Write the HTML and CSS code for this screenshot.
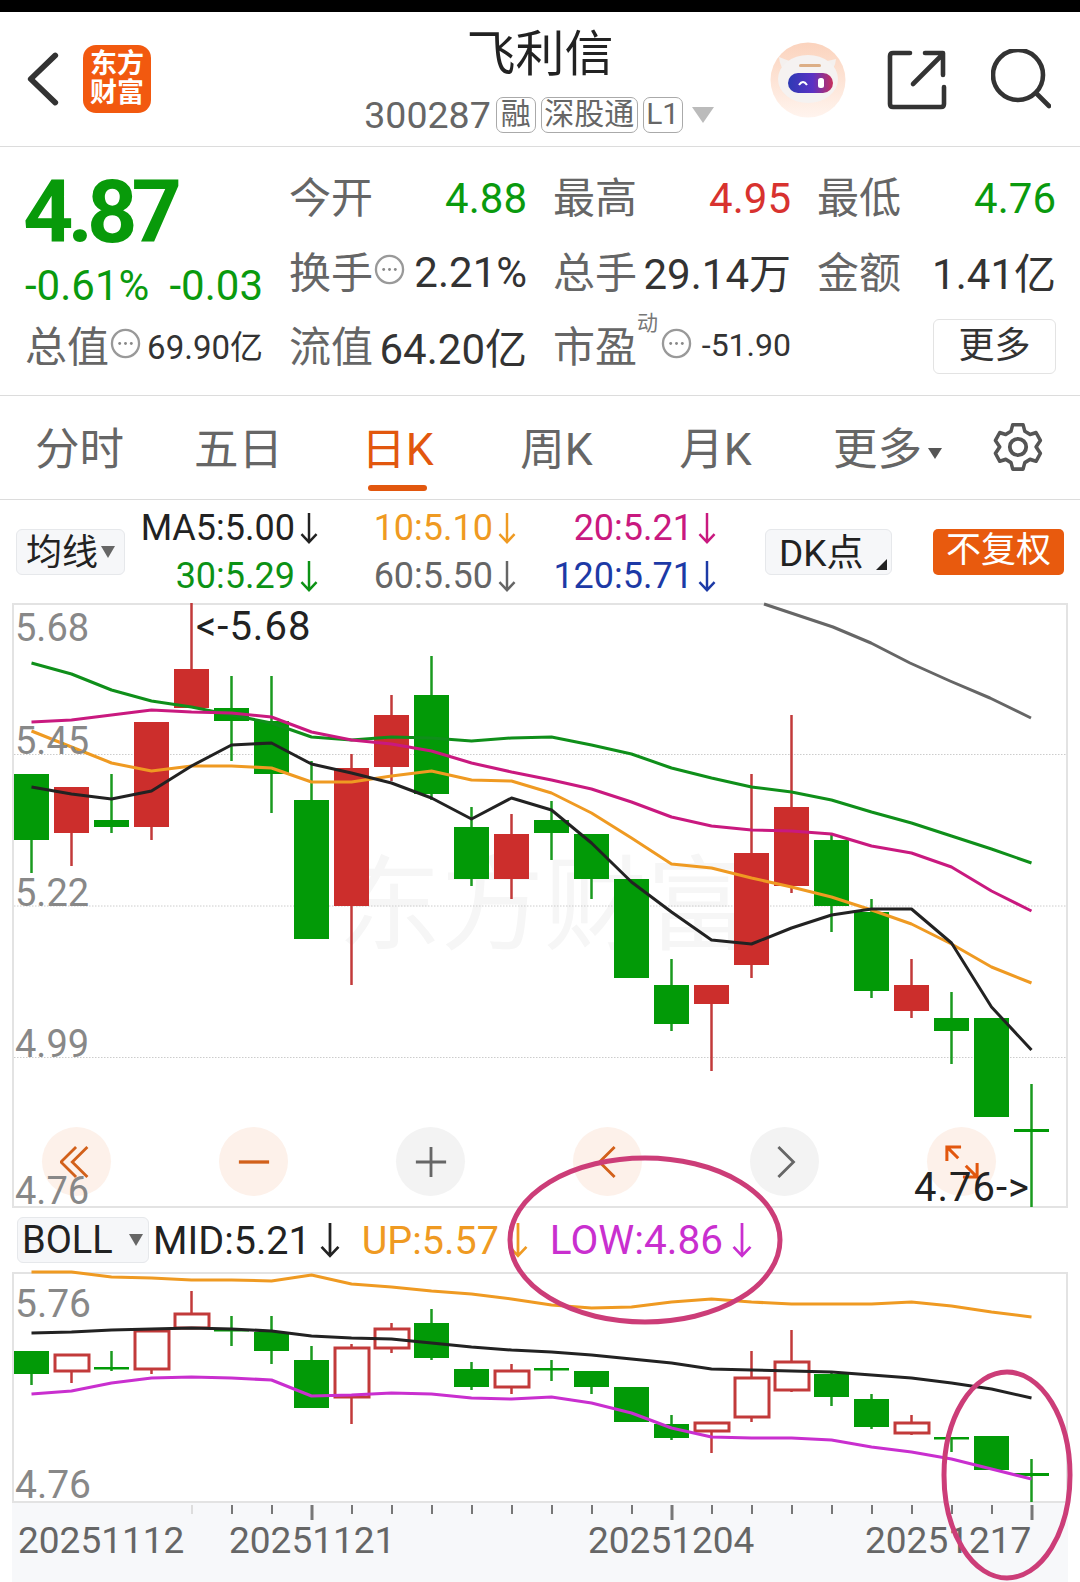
FILE: index.html
```html
<!DOCTYPE html>
<html lang="zh">
<head>
  <meta charset="UTF-8">
  <meta name="viewport" content="width=device-width, initial-scale=1.0">
  <title>飞利信 300287</title>
  <link rel="stylesheet" href="styles.css">
</head>
<body>

  <!-- shared icons -->
  <svg class="defs" width="0" height="0">
    <symbol id="down" viewBox="0 0 20 36">
      <path d="M10 2V33M2 24.5L10 33L18 24.5" fill="none" stroke="currentColor" stroke-width="2.6"/>
    </symbol>
    <symbol id="dots" viewBox="0 0 32 32">
      <circle cx="16" cy="16" r="14" fill="none" stroke="#999" stroke-width="2.4"/>
      <circle cx="10" cy="16" r="1.5" fill="#888"/>
      <circle cx="16" cy="16" r="1.5" fill="#888"/>
      <circle cx="22" cy="16" r="1.5" fill="#888"/>
    </symbol>
  </svg>

  <div class="status-bar"></div>

  <header class="top-bar">
    <div class="top-left">
      <svg class="back" viewBox="0 0 36 56"><path d="M31 3L5 28L31 53" fill="none" stroke="#333" stroke-width="6" stroke-linecap="round" stroke-linejoin="round"/></svg>
      <div class="logo">东方<br>财富</div>
    </div>
    <div class="title-box">
      <div class="name">飞利信</div>
      <div class="code-row">
        <span class="code">300287</span>
        <span class="tag tag-rong">融</span>
        <span class="tag">深股通</span>
        <span class="tag">L1</span>
        <span class="tag-arrow"></span>
      </div>
    </div>
    <div class="top-right">
      <svg class="bot" viewBox="0 0 76 76">
        <defs>
          <linearGradient id="peach" x1="0" x2="0" y1="0" y2="1">
            <stop offset="0" stop-color="#fbd3bd"/>
            <stop offset="1" stop-color="#fff4ee"/>
          </linearGradient>
          <linearGradient id="visor" x1="0" x2="1" y1="0" y2="0">
            <stop offset="0" stop-color="#2d3ab4"/>
            <stop offset="0.55" stop-color="#5a32c4"/>
            <stop offset="1" stop-color="#c72f5c"/>
          </linearGradient>
        </defs>
        <circle cx="38" cy="38" r="37.5" fill="url(#peach)"/>
        <path d="M9 15Q10 27 17 30L22 20ZM66 17Q65 28 58 30L53 20Z" fill="#f4f0ee"/>
        <ellipse cx="38" cy="37" rx="30" ry="24" fill="#f5f2f1"/>
        <rect x="29" y="22" width="22" height="3" rx="1.5" fill="#dcae86"/>
        <rect x="18" y="31" width="45" height="20" rx="10" fill="url(#visor)"/>
        <path d="M29 43Q33 37 37 43" fill="none" stroke="#fff" stroke-width="2"/>
        <rect x="48" y="36" width="6" height="10" rx="2.5" fill="#fff"/>
      </svg>
      <svg class="share" viewBox="0 0 60 60"><path d="M23 3H6Q3 3 3 6V54Q3 57 6 57H54Q57 57 57 54V37M26 34L55 5M38 3H56V25" fill="none" stroke="#333" stroke-width="4.6" stroke-linecap="round" stroke-linejoin="round"/></svg>
      <svg class="search" viewBox="0 0 60 60"><circle cx="27" cy="26" r="25" fill="none" stroke="#333" stroke-width="4.6"/><path d="M45 44L58 57" fill="none" stroke="#333" stroke-width="4.6" stroke-linecap="round"/></svg>
    </div>
  </header>

  <section class="quote">
    <div class="q-price">4.87</div>
    <div class="q-cell"><span class="lb">今开</span><span class="val green">4.88</span></div>
    <div class="q-cell"><span class="lb">最高</span><span class="val red">4.95</span></div>
    <div class="q-cell"><span class="lb">最低</span><span class="val green">4.76</span></div>

    <div class="q-change green"><span>-0.61%</span><span>-0.03</span></div>
    <div class="q-cell"><span class="lb">换手<svg class="dots"><use href="#dots"/></svg></span><span class="val">2.21%</span></div>
    <div class="q-cell"><span class="lb">总手</span><span>29.14万</span></div>
    <div class="q-cell"><span class="lb">金额</span><span>1.41亿</span></div>

    <div class="q-cell"><span class="lb">总值<svg class="dots"><use href="#dots"/></svg></span><span class="small">69.90亿</span></div>
    <div class="q-cell"><span class="lb">流值</span><span>64.20亿</span></div>
    <div class="q-cell"><span class="lb">市盈<sup class="dong">动</sup><svg class="dots"><use href="#dots"/></svg></span><span class="smaller">-51.90</span></div>
    <div class="q-more"><button class="more-btn">更多</button></div>
  </section>

  <nav class="tabs">
    <div class="tab">分时</div>
    <div class="tab">五日</div>
    <div class="tab active">日K</div>
    <div class="tab">周K</div>
    <div class="tab">月K</div>
    <div class="tab tab-more">更多<span class="tab-arrow"></span></div>
    <svg class="gear" viewBox="0 0 52 54">
      <path d="M20 3H32L34 10L40 13.500L47 11.500L52 20L47 27L52 34L47 42.500L40 40.500L34 44L32 51H20L18 44L12 40.500L5 42.500L0 34L5 27L0 20L5 11.500L12 13.500L18 10Z" transform="translate(2.500 1) scale(.9 .96)" fill="none" stroke="#555" stroke-width="4" stroke-linejoin="round"/>
      <circle cx="26" cy="27" r="8.500" fill="none" stroke="#555" stroke-width="4"/>
    </svg>
  </nav>

  <div class="ma-bar">
    <div class="select select-ma">均线<span class="sel-arrow"></span></div>
    <div class="ma-grid">
      <span class="c-black">MA5:5.00<svg class="arr"><use href="#down"/></svg></span>
      <span class="c-orange">10:5.10<svg class="arr"><use href="#down"/></svg></span>
      <span class="c-pink">20:5.21<svg class="arr"><use href="#down"/></svg></span>
      <span class="c-green">30:5.29<svg class="arr"><use href="#down"/></svg></span>
      <span class="c-grey">60:5.50<svg class="arr"><use href="#down"/></svg></span>
      <span class="c-blue">120:5.71<svg class="arr"><use href="#down"/></svg></span>
    </div>
    <div class="select select-dk">DK点<span class="corner"></span></div>
    <div class="fq-btn">不复权</div>
  </div>

  <div class="chart chart-main">
    <svg id="mainChart" class="plot" viewBox="14 605 1052 601"></svg>
    <div class="watermark">东方财富</div>
    <div class="chart-tools">
      <div class="tool warm"><svg viewBox="0 0 36 36"><path d="M17 2L1 18L17 34M29 2L13 18L29 34" fill="none" stroke="#d2601a" stroke-width="3"/></svg></div>
      <div class="tool warm"><svg viewBox="0 0 36 36"><path d="M2 18H34" fill="none" stroke="#d2601a" stroke-width="3.500"/></svg></div>
      <div class="tool cold"><svg viewBox="0 0 36 36"><path d="M2 18H34M18 2V34" fill="none" stroke="#666" stroke-width="3"/></svg></div>
      <div class="tool warm"><svg viewBox="0 0 36 36"><path d="M25 2L9 18L25 34" fill="none" stroke="#d2601a" stroke-width="3"/></svg></div>
      <div class="tool cold"><svg viewBox="0 0 36 36"><path d="M11 2L27 18L11 34" fill="none" stroke="#666" stroke-width="3"/></svg></div>
      <div class="tool warm"><svg viewBox="0 0 36 36"><path d="M2 17V2H17M2 2L14 14M34 19V34H19M34 34L22 22" fill="none" stroke="#e2570e" stroke-width="3.200"/></svg></div>
    </div>
    <svg class="plot-labels" viewBox="14 605 1052 601">
      <text class="axis" x="15" y="641">5.68</text>
      <text class="axis" x="15" y="754">5.45</text>
      <text class="axis" x="15" y="906">5.22</text>
      <text class="axis" x="15" y="1057">4.99</text>
      <text class="axis" x="15" y="1204">4.76</text>
      <text class="mark" x="196" y="640">&lt;-5.68</text>
      <text class="mark" x="914" y="1201">4.76-&gt;</text>
    </svg>
  </div>

  <div class="boll-bar">
    <div class="select select-boll">BOLL<span class="sel-arrow"></span></div>
    <span class="boll-item c-black">MID:5.21<svg class="arr arr-lg"><use href="#down"/></svg></span>
    <span class="boll-item c-orange">UP:5.57<svg class="arr arr-lg"><use href="#down"/></svg></span>
    <span class="boll-item c-violet">LOW:4.86<svg class="arr arr-lg"><use href="#down"/></svg></span>
  </div>

  <div class="chart chart-sub">
    <svg id="subChart" class="plot" viewBox="14 1274 1052 227"></svg>
    <svg class="plot-labels" viewBox="14 1274 1052 227">
      <text class="axis axis-lg" x="15" y="1317">5.76</text>
      <text class="axis axis-lg" x="15" y="1498">4.76</text>
    </svg>
  </div>

  <div class="date-strip">
    <svg id="dateAxis" class="date-svg" viewBox="12 1503 1056 79">
      <text class="date" x="18" y="1553">20251112</text>
      <text class="date" x="229" y="1553">20251121</text>
      <text class="date" x="588" y="1553">20251204</text>
      <text class="date" x="865" y="1553">20251217</text>
    </svg>
  </div>

  <!-- hand drawn circles on top of the screenshot -->
  <svg class="scribble" viewBox="0 0 1080 1582">
    <ellipse cx="645" cy="1240" rx="135" ry="82" />
    <ellipse cx="1007" cy="1475" rx="63" ry="103" />
  </svg>

  <script src="chart.js"></script>
</body>
</html>
```

FILE: styles.css
```css
* {
  box-sizing: border-box;
}

html, body {
  margin: 0;
  padding: 0;
}

body {
  position: relative;
  width: 1080px;
  height: 1582px;
  overflow: hidden;
  background: #fff;
  color: #333;
  font-family: Roboto, "Noto Sans CJK SC", sans-serif;
}

.defs {
  position: absolute;
}

.status-bar {
  height: 12px;
  background: #000;
}

/* top bar */
.top-bar {
  display: grid;
  grid-template-columns: 1fr auto 1fr;
  height: 135px;
  border-bottom: 1px solid #dcdcdc;
}

.top-left {
  display: flex;
  align-items: center;
  padding: 0 0 0 26px;
}

.back {
  width: 34px;
  height: 54px;
}

.logo {
  width: 68px;
  height: 68px;
  margin-left: 23px;
  padding-top: 5px;
  border-radius: 13px;
  background: #f2590f;
  color: #fff;
  font-size: 27px;
  font-weight: 700;
  line-height: 29px;
  text-align: center;
}

.title-box {
  display: flex;
  flex-direction: column;
  align-items: center;
}

.name {
  margin-top: 14px;
  color: #222;
  font-size: 49px;
  line-height: 58px;
}

.code-row {
  display: flex;
  align-items: center;
  gap: 5px;
  margin-top: 11px;
  color: #666;
}

.code {
  font-size: 37.500px;
  line-height: 40px;
}

.tag {
  height: 36px;
  padding: 0 2.500px;
  border: 1.5px solid #aaa;
  border-radius: 7px;
  font-size: 30px;
  line-height: 32px;
}

.tag-rong {
  padding: 0 4px;
}

.tag-arrow {
  width: 0;
  height: 0;
  margin: 0 2px 0 4px;
  border-top: 16px solid #bbb;
  border-left: 11px solid transparent;
  border-right: 11px solid transparent;
}

.top-right {
  display: flex;
  align-items: flex-start;
  justify-content: flex-end;
  padding: 30px 29px 0 0;
}

.bot {
  width: 76px;
  height: 76px;
}

.share {
  width: 60px;
  height: 60px;
  margin: 8px 0 0 41px;
}

.search {
  width: 60px;
  height: 60px;
  margin: 7px 0 0 44px;
}

/* quote block */
.quote {
  display: grid;
  grid-template-columns: 238px 238px 238px 239px;
  grid-template-rows: repeat(3, 74.500px);
  column-gap: 26px;
  height: 249px;
  padding: 12px 0 0 25px;
  border-bottom: 1px solid #dcdcdc;
  font-size: 42px;
}

.q-cell {
  display: flex;
  align-items: center;
  justify-content: space-between;
  white-space: nowrap;
}

.lb {
  display: flex;
  align-items: center;
  position: relative;
  margin-bottom: 3px;
  color: #666;
}

.val {
  margin-top: 4px;
}

.dots {
  width: 31px;
  height: 31px;
  margin-left: 1px;
}

.dong {
  position: absolute;
  left: 84px;
  top: -2px;
  color: #777;
  font-size: 21px;
  line-height: 24px;
}

.q-cell .lb .dong + .dots {
  margin-left: 24px;
}

.green {
  color: #0a9a0e;
}

.red {
  color: #d8322f;
}

.small {
  font-size: 33px;
}

.smaller {
  font-size: 32px;
}

.q-price {
  margin: 8px 0 0 -2px;
  color: #089a0a;
  font-size: 88px;
  font-weight: 700;
  letter-spacing: -6px;
  line-height: 90px;
}

.q-change {
  display: flex;
  align-items: center;
  justify-content: space-between;
  padding-top: 30px;
}

.q-more {
  display: flex;
  justify-content: flex-end;
  align-items: center;
  padding-top: 2px;
}

.more-btn {
  width: 123px;
  height: 55px;
  padding: 0;
  border: 1px solid #e3e3e3;
  border-radius: 6px;
  background: #fff;
  color: #333;
  font-family: inherit;
  font-size: 36px;
  line-height: 50px;
}

/* period tabs */
.tabs {
  display: grid;
  grid-template-columns: repeat(6, 159px) 1fr;
  align-items: center;
  height: 104px;
  padding-bottom: 4px;
  border-bottom: 1px solid #dcdcdc;
}

.tab {
  position: relative;
  color: #666;
  font-size: 44.500px;
  text-align: center;
}

.tab.active {
  color: #e2570e;
}

.tab.active::after {
  content: "";
  position: absolute;
  left: 50px;
  right: 50px;
  bottom: -13px;
  height: 6px;
  border-radius: 3px;
  background: #e2570e;
}

.tab-more {
  white-space: nowrap;
  margin-left: 26px;
}

.tab-arrow {
  display: inline-block;
  margin-left: 6px;
  vertical-align: middle;
  border-top: 11px solid #555;
  border-left: 7px solid transparent;
  border-right: 7px solid transparent;
}

.gear {
  width: 50px;
  height: 52px;
  justify-self: center;
  margin: 2px 0 0 2px;
}

/* moving average legend */
.ma-bar {
  display: flex;
  align-items: center;
  height: 103px;
  padding: 0 0 0 16px;
}

.select {
  display: flex;
  align-items: center;
  height: 46px;
  border: 1px solid #e6e8eb;
  border-radius: 6px;
  background: #f6f7f9;
  color: #222;
}

.select-ma {
  width: 109px;
  padding: 0 0 5px 9px;
  font-size: 36px;
}

.sel-arrow {
  margin: 5px 0 0 3px;
  border-top: 12px solid #666;
  border-left: 7px solid transparent;
  border-right: 7px solid transparent;
}

.ma-grid {
  display: grid;
  grid-template-columns: 194px 198px 200px;
  grid-auto-rows: 48px;
  align-items: center;
  justify-items: end;
  width: 592px;
  font-size: 36px;
}

.ma-grid span,
.boll-item {
  display: flex;
  align-items: center;
  white-space: nowrap;
}

.arr {
  width: 20px;
  height: 34px;
  margin-left: 4px;
}

.arr-lg {
  width: 24px;
  height: 38px;
  margin-left: 7px;
}

.c-black { color: #222; }
.c-orange { color: #ef9a22; }
.c-pink { color: #c9197f; }
.c-green { color: #0c9215; }
.c-grey { color: #666; }
.c-blue { color: #1d3aa6; }
.c-violet { color: #c92fcf; font-size: 40.500px; }

.select-dk {
  position: relative;
  width: 127px;
  margin-left: 48px;
  padding: 0 0 4px 13px;
  font-size: 37px;
}

.corner {
  position: absolute;
  right: 4px;
  bottom: 4px;
  border-bottom: 11px solid #222;
  border-left: 11px solid transparent;
}

.fq-btn {
  width: 131px;
  height: 46px;
  margin-left: 41px;
  border-radius: 5px;
  background: #e85a0e;
  color: #fff;
  font-size: 35px;
  line-height: 44px;
  text-align: center;
}

/* charts */
.chart {
  position: relative;
  width: 1056px;
  margin-left: 12px;
  border: 2px solid #e3e3e3;
}

.chart-main {
  height: 605px;
}

.chart-sub {
  height: 231px;
}

.plot,
.plot-labels {
  display: block;
  width: 1052px;
  overflow: visible;
}

.chart-main .plot,
.chart-main .plot-labels {
  height: 601px;
}

.chart-sub .plot,
.chart-sub .plot-labels {
  height: 227px;
}

.plot-labels {
  position: absolute;
  left: 0;
  top: 0;
}

.watermark {
  position: absolute;
  left: 324px;
  top: 240px;
  z-index: -1;
  color: #f6f6f6;
  font-size: 103px;
  line-height: 124px;
  white-space: nowrap;
}

.chart-tools {
  position: absolute;
  left: 28px;
  bottom: 10px;
  display: flex;
  gap: 108px;
}

.tool {
  display: flex;
  align-items: center;
  justify-content: center;
  width: 69px;
  height: 69px;
  border-radius: 50%;
}

.tool svg {
  width: 34px;
  height: 34px;
}

.warm {
  background: #fdf1ea;
}

.cold {
  background: #f3f3f3;
}

.axis {
  fill: #888;
  font-size: 38px;
}

.axis-lg {
  font-size: 39px;
}

.mark {
  fill: #222;
  font-size: 40px;
  letter-spacing: 1px;
}

/* boll legend */
.boll-bar {
  display: flex;
  align-items: center;
  height: 64px;
  padding-left: 17px;
  font-size: 39.500px;
}

.select-boll {
  width: 132px;
  height: 46px;
  margin-right: 4px;
  padding-left: 4px;
  font-size: 38px;
}

.select-boll .sel-arrow {
  margin: 0 0 0 16px;
}

.boll-item {
  margin-right: 20px;
}

/* date axis */
.date-strip {
  width: 1056px;
  height: 79px;
  margin-left: 12px;
  background: #f7f8fa;
}

.date-svg {
  display: block;
  width: 1056px;
  height: 79px;
}

.date {
  fill: #666;
  font-size: 37px;
}

.scribble {
  position: absolute;
  left: 0;
  top: 0;
  width: 1080px;
  height: 1582px;
  fill: none;
  stroke: #cc3d78;
  stroke-width: 5;
  pointer-events: none;
}
```

FILE: chart.js
```js
// [high, bodyTop, bodyBottom, low, up?]  y values in page pixels
const mainCandles = [
  [774, 774, 840, 873, 0], [787, 787, 833, 866, 1], [774, 820, 827, 833, 0], [722, 722, 827, 840, 1],
  [603, 669, 708, 708, 1], [676, 708, 721, 761, 0], [676, 721, 774, 813, 0], [761, 800, 939, 939, 0],
  [754, 768, 906, 985, 1], [695, 715, 767, 781, 1], [656, 695, 794, 800, 0], [807, 827, 879, 886, 0],
  [814, 834, 879, 899, 1], [801, 820, 833, 860, 0], [834, 834, 879, 899, 0], [879, 879, 978, 978, 0],
  [959, 985, 1024, 1031, 0], [985, 985, 1004, 1071, 1], [774, 853, 965, 978, 1], [715, 807, 886, 893, 1],
  [833, 840, 906, 932, 0], [899, 912, 991, 998, 0], [959, 985, 1011, 1018, 1], [992, 1018, 1031, 1064, 0],
  [1018, 1018, 1117, 1117, 0], [1084, 1129, 1132, 1207, 0]
];

const subCandles = [
  [1351, 1351, 1374, 1385, 0], [1355, 1355, 1371, 1383, 1], [1351, 1367, 1369, 1371, 0], [1331, 1331, 1369, 1374, 1],
  [1291, 1314, 1328, 1328, 1], [1316, 1329, 1331, 1346, 0], [1316, 1332, 1351, 1364, 0], [1346, 1360, 1408, 1408, 0],
  [1344, 1348, 1397, 1424, 1], [1323, 1329, 1348, 1353, 1], [1309, 1323, 1358, 1360, 0], [1362, 1369, 1387, 1390, 0],
  [1364, 1371, 1387, 1394, 1], [1360, 1368, 1370, 1381, 0], [1371, 1371, 1387, 1394, 0], [1387, 1387, 1422, 1422, 0],
  [1415, 1424, 1438, 1440, 0], [1423, 1423, 1431, 1453, 1], [1351, 1378, 1417, 1422, 1], [1330, 1362, 1390, 1392, 1],
  [1371, 1374, 1397, 1406, 0], [1394, 1399, 1427, 1429, 0], [1415, 1423, 1433, 1435, 1], [1437, 1437, 1439, 1452, 0],
  [1436, 1436, 1470, 1470, 0], [1459, 1473, 1476, 1502, 0]
];

const mainLines = [
  { color: "#0f8f1a", y: [663, 674, 690, 701, 707, 715, 723, 737, 740, 737, 738, 741, 738, 737, 745, 754, 768, 778, 787, 792, 800, 812, 823, 836, 849, 863] },
  { color: "#c9197f", y: [722, 720, 715, 710, 712, 713, 717, 732, 740, 744, 751, 763, 772, 780, 789, 802, 817, 826, 830, 831, 834, 846, 853, 867, 891, 911] },
  { color: "#ef9a22", y: [731, 747, 763, 771, 766, 766, 768, 782, 782, 776, 771, 780, 781, 793, 813, 838, 864, 868, 878, 887, 897, 910, 924, 944, 967, 983] },
  { color: "#222", y: [787, 794, 799, 791, 766, 745, 743, 764, 773, 783, 798, 819, 798, 810, 843, 882, 912, 940, 944, 928, 915, 909, 909, 943, 1007, 1050] }
];

const subLines = [
  { color: "#ef9a22", y: [1272, 1272, 1277, 1278, 1280, 1280, 1281, 1275, 1284, 1287, 1291, 1294, 1299, 1305, 1308, 1307, 1302, 1299, 1302, 1304, 1304, 1304, 1302, 1306, 1312, 1317] },
  { color: "#222", y: [1333, 1332, 1330, 1329, 1328, 1329, 1331, 1336, 1338, 1339, 1343, 1347, 1350, 1352, 1355, 1359, 1363, 1369, 1370, 1371, 1372, 1375, 1378, 1383, 1389, 1398] },
  { color: "#c92fcf", y: [1394, 1391, 1383, 1378, 1377, 1378, 1380, 1396, 1395, 1393, 1394, 1398, 1399, 1397, 1403, 1413, 1428, 1437, 1438, 1438, 1440, 1447, 1452, 1459, 1469, 1479] }
];

const GREEN = "#029a07";
const GREEN_WICK = "#1a9a1f";
const RED = "#cc2e2c";
const RED_WICK = "#c23a3a";

function xAt(i) {
  return 31.5 + i * 40;
}

function line(x1, y1, x2, y2, color, width) {
  return `<line x1="${x1}" y1="${y1}" x2="${x2}" y2="${y2}" stroke="${color}" stroke-width="${width}"/>`;
}

function drawCandle(c, i, hollow) {
  const x = xAt(i);
  const up = c[4] === 1;
  const wick = up ? RED_WICK : GREEN_WICK;
  let out = line(x, c[0], x, c[3], wick, 2.5);
  const h = Math.max(c[2] - c[1], 2.5);
  if (up && hollow) {
    out += `<rect x="${x - 16.5}" y="${c[1]}" width="34" height="${h}" fill="#fff" stroke="${RED_WICK}" stroke-width="3"/>`;
  } else {
    out += `<rect x="${x - 17.5}" y="${c[1]}" width="35" height="${h}" fill="${up ? RED : GREEN}"/>`;
  }
  return out;
}

function polyline(points, color, width) {
  return `<polyline points="${points}" fill="none" stroke="${color}" stroke-width="${width}" stroke-linejoin="round"/>`;
}

function seriesPoints(ys) {
  return ys.map((y, i) => `${xAt(i)},${y}`).join(" ");
}

// main chart
let main = "";
[754.5, 906, 1057.5].forEach(y => {
  main += `<line x1="14" y1="${y}" x2="1066" y2="${y}" stroke="#ccc" stroke-width="1" stroke-dasharray="1.500 1.500"/>`;
});
mainCandles.forEach((c, i) => { main += drawCandle(c, i, false); });
main += polyline("764,604 833,627 871,643 910,663 950,681 990,698 1031,718", "#666", 3);
mainLines.forEach(l => { main += polyline(seriesPoints(l.y), l.color, 3); });
document.getElementById("mainChart").innerHTML = main;

// boll chart
let sub = "";
subCandles.forEach((c, i) => { sub += drawCandle(c, i, true); });
subLines.forEach(l => { sub += polyline(seriesPoints(l.y), l.color, 3); });
document.getElementById("subChart").innerHTML = sub;

// ticks on the date axis
let ticks = "";
for (let i = 4; i < 26; i++) {
  const long = i === 7 || i === 16 || i === 25;
  ticks += line(xAt(i) + 0.5, 1505, xAt(i) + 0.5, long ? 1520 : 1514, i === 4 ? "#ddd" : "#777", long ? 3 : 2);
}
document.getElementById("dateAxis").insertAdjacentHTML("beforeend", ticks);
```
